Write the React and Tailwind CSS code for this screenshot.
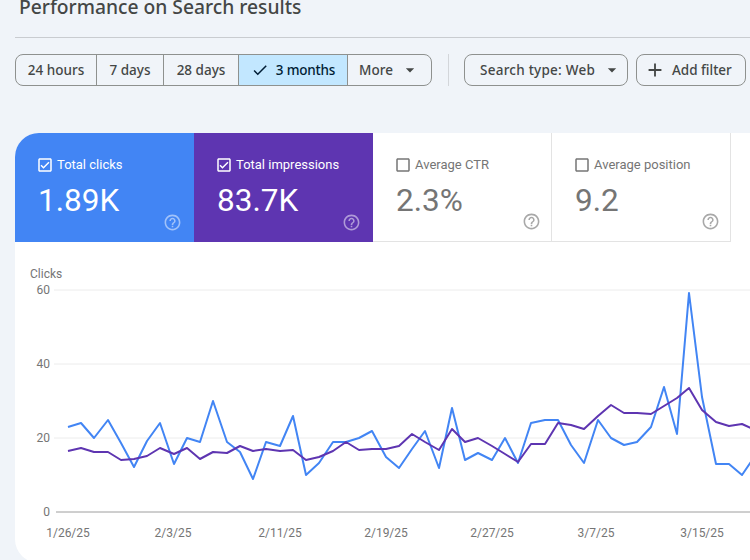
import React from 'react';
import { MdCheck, MdAdd, MdArrowDropDown, MdHelpOutline, MdOutlineCheckBox, MdCheckBoxOutlineBlank } from 'react-icons/md';

const xs = [68, 81, 94, 108, 121, 134, 147, 160, 174, 187, 200, 213, 227, 240, 253, 266, 280, 293, 306, 319, 333, 346, 359, 372, 386, 399, 412, 425, 439, 452, 465, 478, 492, 505, 518, 531, 545, 558, 571, 584, 598, 611, 624, 637, 651, 664, 677, 689, 702, 716, 729, 742, 755];
const clicks = [427, 423, 438, 420, 443, 467, 441, 423, 464, 438, 442, 401, 442, 452, 479, 442, 446, 416, 475, 463, 442, 442, 438, 431, 457, 468, 449, 431, 468, 408, 460, 453, 460, 438, 463, 423, 420, 420, 445, 463, 420, 438, 445, 442, 427, 387, 434, 293, 397, 464, 464, 475, 456];
const impressions = [451, 448, 452, 452, 460, 459, 456, 448, 454, 448, 459, 452, 453, 446, 451, 449, 451, 450, 460, 457, 451, 442, 450, 449, 449, 446, 434, 442, 450, 429, 442, 438, 446, 454, 462, 444, 444, 423, 425, 429, 416, 405, 413, 413, 414, 406, 398, 388, 410, 422, 426, 424, 430];

const toPoints = (ys) => ys.map((y, i) => `${xs[i]},${y}`).join(' ');

const yTicks = [
  { label: '60', y: 290 },
  { label: '40', y: 364 },
  { label: '20', y: 438 },
];
const dates = [
  { label: '1/26/25', x: 68 },
  { label: '2/3/25', x: 173 },
  { label: '2/11/25', x: 280 },
  { label: '2/19/25', x: 386 },
  { label: '2/27/25', x: 492 },
  { label: '3/7/25', x: 596 },
  { label: '3/15/25', x: 702 },
];

const sans = 'font-["Noto_Sans",sans-serif]';

const Metric = ({ label, value, checked, className, helpClass }) => (
  <div className={`relative h-[109px] w-[179px] shrink-0 pl-[21px] pt-[23px] ${className}`}>
    <div className="flex h-[18px] items-center gap-[3px] text-[13px] leading-[18px]">
      {checked ? <MdOutlineCheckBox size={18} /> : <MdCheckBoxOutlineBlank size={18} />}
      <span>{label}</span>
    </div>
    <div className="ml-[2px] mt-[8px] text-[31.5px] font-normal leading-[38px]">{value}</div>
    <MdHelpOutline size={19} className={`absolute bottom-[10px] ${helpClass}`} />
  </div>
);

const Segment = ({ children, className = '' }) => (
  <div className={`flex h-full items-center justify-center border-r border-[#8e918f] ${className}`}>{children}</div>
);

export default function App() {
  return (
    <div className={`h-[560px] w-[750px] overflow-hidden bg-[#f0f4f9] ${sans}`}>
      <div className="-mt-[6px] h-[44px] border-b border-[#c9ccd0] ml-[15px]">
        <h1 className="pl-[4px] text-[19.25px] font-medium leading-[26px] text-[#444746]">Performance on Search results</h1>
      </div>

      <div className="ml-[15px] mt-[16px] flex h-[32px] items-center whitespace-nowrap text-[13.5px] font-medium text-[#444746]">
        <div className="flex h-full w-[417px] overflow-hidden rounded-lg border border-[#8e918f]">
          <Segment className="w-[81px]">24 hours</Segment>
          <Segment className="w-[67px]">7 days</Segment>
          <Segment className="w-[75px]">28 days</Segment>
          <Segment className="w-[109px] gap-[7px] bg-[#c2e7ff] text-[#001d35]">
            <MdCheck size={18} />
            <span className="tracking-[-0.2px]">3 months</span>
          </Segment>
          <div className="flex flex-1 items-center justify-center gap-[7px]">
            More
            <MdArrowDropDown size={20} />
          </div>
        </div>
        <div className="ml-[16px] mr-[15px] h-full w-px bg-[#d3d6da]" />
        <div className="flex h-full w-[164px] items-center gap-[7px] rounded-lg border border-[#8e918f] pl-[15px]">
          <span className="tracking-[0.25px]">Search type: Web</span>
          <MdArrowDropDown size={20} />
        </div>
        <div className="ml-[8px] flex h-full w-[110px] items-center gap-[6px] rounded-lg border border-[#8e918f] pl-[7px]">
          <MdAdd size={22} />
          Add filter
        </div>
      </div>

      <div className="ml-[15px] mt-[47px] h-[430px] w-[760px] overflow-hidden rounded-l-[24px] bg-white font-['Roboto',sans-serif]">
        <div className="flex">
          <Metric label="Total clicks" value="1.89K" checked className="bg-[#4285f4] text-white" helpClass="right-[12px] text-white/50" />
          <Metric label="Total impressions" value="83.7K" checked className="bg-[#5e35b1] text-white" helpClass="right-[12px] text-white/50" />
          <Metric label="Average CTR" value="2.3%" className="border-b border-r border-[#e3e3e3] bg-white text-[#757575]" helpClass="right-[10px] text-[#a8a8a8]" />
          <Metric label="Average position" value="9.2" className="border-b border-r border-[#e3e3e3] bg-white text-[#757575]" helpClass="right-[10px] text-[#a8a8a8]" />
        </div>

        <svg width="735" height="321" viewBox="15 242 735 321" className="block text-[12px]" fill="#757575">
          <text x="30" y="278">Clicks</text>
          {yTicks.map((t) => (
            <g key={t.label}>
              <line x1="54" x2="750" y1={t.y} y2={t.y} stroke="#ececec" />
              <text x="50" y={t.y + 4} textAnchor="end">{t.label}</text>
            </g>
          ))}
          <line x1="56" x2="750" y1="512" y2="512" stroke="#9e9e9e" />
          <text x="50" y="516" textAnchor="end">0</text>
          {dates.map((d) => (
            <text key={d.label} x={d.x} y="537" textAnchor="middle">{d.label}</text>
          ))}
          <polyline points={toPoints(clicks)} fill="none" stroke="#4285f4" strokeWidth="2" strokeLinejoin="round" />
          <polyline points={toPoints(impressions)} fill="none" stroke="#5e35b1" strokeWidth="2" strokeLinejoin="round" />
        </svg>
      </div>
    </div>
  );
}
